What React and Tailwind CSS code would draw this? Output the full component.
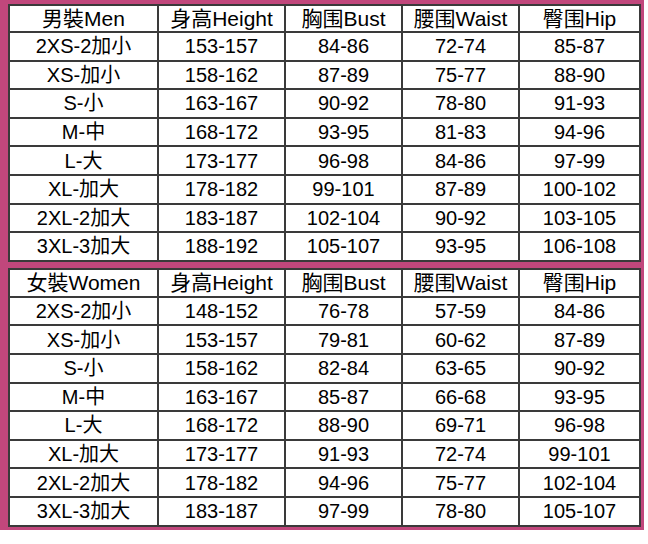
import React from 'react';

const COLS = ['w-[149px]', 'w-[127px]', 'w-[117px]', 'w-[117px]', 'w-[121px]'];

const MEN = {
  head: ['男裝Men', '身高Height', '胸围Bust', '腰围Waist', '臀围Hip'],
  rows: [
    ['2XS-2加小', '153-157', '84-86', '72-74', '85-87'],
    ['XS-加小', '158-162', '87-89', '75-77', '88-90'],
    ['S-小', '163-167', '90-92', '78-80', '91-93'],
    ['M-中', '168-172', '93-95', '81-83', '94-96'],
    ['L-大', '173-177', '96-98', '84-86', '97-99'],
    ['XL-加大', '178-182', '99-101', '87-89', '100-102'],
    ['2XL-2加大', '183-187', '102-104', '90-92', '103-105'],
    ['3XL-3加大', '188-192', '105-107', '93-95', '106-108'],
  ],
};

const WOMEN = {
  head: ['女裝Women', '身高Height', '胸围Bust', '腰围Waist', '臀围Hip'],
  rows: [
    ['2XS-2加小', '148-152', '76-78', '57-59', '84-86'],
    ['XS-加小', '153-157', '79-81', '60-62', '87-89'],
    ['S-小', '158-162', '82-84', '63-65', '90-92'],
    ['M-中', '163-167', '85-87', '66-68', '93-95'],
    ['L-大', '168-172', '88-90', '69-71', '96-98'],
    ['XL-加大', '173-177', '91-93', '72-74', '99-101'],
    ['2XL-2加大', '178-182', '94-96', '75-77', '102-104'],
    ['3XL-3加大', '183-187', '97-99', '78-80', '105-107'],
  ],
};

const SizeTable = ({ data, headH, rowH }) => (
  <table className="w-full border-collapse bg-white table-fixed">
    <colgroup>
      {COLS.map((c, i) => <col key={i} className={c} />)}
    </colgroup>
    <thead>
      <tr className={headH}>
        {data.head.map((h, i) => (
          <th key={i} className="border-2 border-[#3a3a3a] p-0 text-center text-[21px] font-normal leading-none">{h}</th>
        ))}
      </tr>
    </thead>
    <tbody>
      {data.rows.map((r, i) => (
        <tr key={i} className={rowH}>
          {r.map((v, j) => (
            <td key={j} className="border-2 border-[#3a3a3a] p-0 text-center text-[20px] leading-none">{v}</td>
          ))}
        </tr>
      ))}
    </tbody>
  </table>
);

export default function App() {
  return (
    <div className="w-[648px] h-[544px] bg-white text-black" style={{ fontFamily: '"Liberation Sans", Arial, "Noto Sans CJK SC", sans-serif' }}>
      <div className="w-[644px] bg-[#c1477c] pt-[4px] pl-[8px] pr-[5px] pb-[3px] flex flex-col gap-[6px]">
        <SizeTable data={MEN} headH="h-[27px]" rowH="h-[28.6px]" />
        <SizeTable data={WOMEN} headH="h-[28px]" rowH="h-[28.6px]" />
      </div>
    </div>
  );
}
